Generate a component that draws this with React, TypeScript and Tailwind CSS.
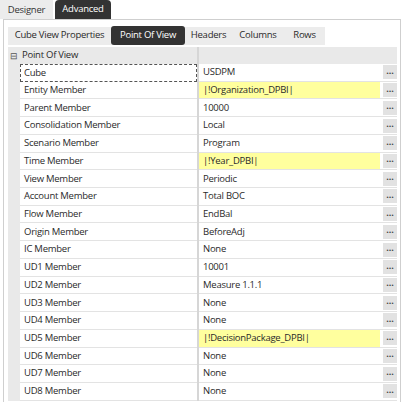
import React from "react";

const rows: { label: string; value: string; yellow?: boolean }[] = [
  { label: "Cube", value: "USDPM" },
  { label: "Entity Member", value: "|!Organization_DPBI|", yellow: true },
  { label: "Parent Member", value: "10000" },
  { label: "Consolidation Member", value: "Local" },
  { label: "Scenario Member", value: "Program" },
  { label: "Time Member", value: "|!Year_DPBI|", yellow: true },
  { label: "View Member", value: "Periodic" },
  { label: "Account Member", value: "Total BOC" },
  { label: "Flow Member", value: "EndBal" },
  { label: "Origin Member", value: "BeforeAdj" },
  { label: "IC Member", value: "None" },
  { label: "UD1 Member", value: "10001" },
  { label: "UD2 Member", value: "Measure 1.1.1" },
  { label: "UD3 Member", value: "None" },
  { label: "UD4 Member", value: "None" },
  { label: "UD5 Member", value: "|!DecisionPackage_DPBI|", yellow: true },
  { label: "UD6 Member", value: "None" },
  { label: "UD7 Member", value: "None" },
  { label: "UD8 Member", value: "None" },
];

export default function App() {
  return (
    <div
      className="w-[404px] h-[402px] bg-white overflow-hidden text-[9.5px] tracking-[-0.25px] text-[#2a2a2a]"
      style={{ fontFamily: '"Open Sans", "Noto Sans", sans-serif' }}
    >
      {/* top tabs */}
      <div className="flex items-end h-[19px]">
        <div className="h-[19px] w-[53px] pt-[2px] flex items-center justify-center bg-[#ececec] text-[#333]">Designer</div>
        <div className="h-[19px] w-[56px] ml-[2px] flex items-center justify-center bg-[#333333] text-white rounded-t-[4px]">Advanced</div>
      </div>
      {/* panel */}
      <div className="mx-[3px] h-[383px] border-t border-l border-r border-[#cfcfcf] px-[4px] pt-[6px]">
        {/* sub tabs */}
        <div className="flex items-center h-[19px]">
          <div className="flex items-center h-[18px] bg-[#ececec]">
            <div className="w-[103px] h-full flex items-center justify-center">Cube View Properties</div>
            <div className="w-[74px] h-[19px] flex items-center justify-center bg-[#333333] text-white rounded-[3px]">Point Of View</div>
            <div className="w-[47px] h-full flex items-center justify-center">Headers</div>
            <div className="w-[52px] h-full flex items-center justify-center">Columns</div>
            <div className="w-[41px] h-full flex items-center justify-center">Rows</div>
          </div>
        </div>
        {/* grid */}
        <div className="mt-[2px] w-[389px]">
          <div className="flex h-[17px] items-center bg-[#e9e9e9]">
            <span className="w-[13px] pl-[2px] text-[9px] text-[#555]">⊟</span>
            <span className="w-[176px] pl-[1px]">Point Of View</span>
            <span className="w-[2px] h-full bg-[#d6d6d6]" />
          </div>
          {rows.map((r, i) => (
            <div key={r.label} className="flex h-[17.72px]">
              <div className="w-[12px] bg-[#e9e9e9]" />
              <div
                className={
                  i === 0
                    ? "w-[177px] flex items-center pl-[3px] border border-dashed border-[#555]"
                    : "w-[177px] flex items-center pl-[4px] border-b border-[#e3e3e3]"
                }
              >
                {r.label}
              </div>
              <div className="w-[2px] bg-[#d6d6d6]" />
              <div className="flex-1 flex items-center border-b border-[#e3e3e3]">
                <div
                  className={
                    "h-full flex-1 flex items-center pl-[4px] " + (r.yellow ? "bg-[#ffff9e]" : "")
                  }
                >
                  {r.value}
                </div>
                <div className="w-[3px]" />
                <div className="w-[14px] h-[14px] bg-[#e2e2e2] flex items-center justify-center text-[9px] font-bold tracking-normal leading-none text-[#444]">
                  ···
                </div>
              </div>
            </div>
          ))}
        </div>
      </div>
    </div>
  );
}
